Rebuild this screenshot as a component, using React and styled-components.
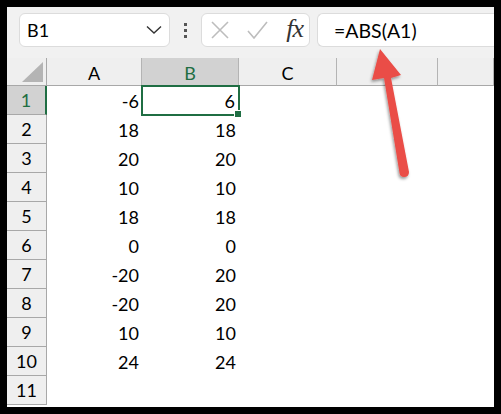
import React from "react";
import styled, { createGlobalStyle } from "styled-components";

const GlobalStyle = createGlobalStyle`
  html, body {
    margin: 0;
    padding: 0;
    background: #000;
  }
  body {
    font-family: Lato, "Liberation Sans", sans-serif;
    color: #000;
  }
`;

const rows = [
  ["-6", "6"],
  ["18", "18"],
  ["20", "20"],
  ["10", "10"],
  ["18", "18"],
  ["0", "0"],
  ["-20", "20"],
  ["-20", "20"],
  ["10", "10"],
  ["24", "24"],
  ["", ""],
];

const GREEN = "#1f6e43";

const Frame = styled.div`
  position: relative;
  box-sizing: border-box;
  width: 501px;
  height: 414px;
  border: 7px solid #000;
  background: #fff;
  overflow: hidden;
`;

const FormulaBar = styled.div`
  display: flex;
  align-items: center;
  height: 51px;
  box-sizing: border-box;
  padding: 6px 0 11px 12px;
  background: #f1f1f1;
`;

const Box = styled.div`
  display: flex;
  flex-shrink: 0;
  align-items: center;
  box-sizing: border-box;
  height: 34px;
  background: #fff;
  border: 1px solid #dcdcdc;
  border-radius: 6px;
`;

const NameBox = styled(Box)`
  width: 151px;
  justify-content: space-between;
  padding: 0 7px;
  font-size: 18px;
`;

const Dots = styled.div`
  display: flex;
  flex-shrink: 0;
  flex-direction: column;
  gap: 3px;
  width: 31px;
  align-items: center;
  i {
    width: 3px;
    height: 3px;
    background: #555;
  }
`;

const ButtonBox = styled(Box)`
  width: 109px;
  justify-content: space-between;
  padding: 0 6px 0 9px;
`;

const Fx = styled.span`
  font-family: "Liberation Serif", serif;
  font-style: italic;
  font-size: 26px;
  line-height: 30px;
  color: #333;
  margin-bottom: 2px;
  letter-spacing: -1px;
`;

const FormulaBox = styled(Box)`
  flex: 1;
  margin-left: 7px;
  padding-left: 16px;
  border-right: none;
  border-radius: 6px 0 0 6px;
  font-size: 19.5px;
`;

const Sheet = styled.div`
  display: grid;
  grid-template-columns: 40px 95px 97px 98px 101px 1fr;
  grid-template-rows: 28px repeat(11, 29px);
  background: #fff;
`;

const Corner = styled.div`
  position: relative;
  background: #efefef;
  border-right: 1px solid #a8a8a8;
  border-bottom: 1px solid #a8a8a8;
  &::after {
    content: "";
    position: absolute;
    right: 3px;
    bottom: 3px;
    border-style: solid;
    border-width: 0 0 20px 21px;
    border-color: transparent transparent #b4b4b4 transparent;
  }
`;

const ColHeader = styled.div`
  display: flex;
  align-items: center;
  justify-content: center;
  padding-top: 2px;
  font-size: 18px;
  background: ${(p) => (p.$active ? "#d2d2d2" : "#efefef")};
  color: ${(p) => (p.$active ? GREEN : "#000")};
  border-right: 1px solid #b4b4b4;
  border-bottom: 1px solid #a8a8a8;
`;

const RowHeader = styled.div`
  display: flex;
  align-items: center;
  justify-content: center;
  font-size: 18px;
  box-sizing: border-box;
  background: ${(p) => (p.$active ? "#d2d2d2" : "#efefef")};
  color: ${(p) => (p.$active ? GREEN : "#000")};
  border-right: ${(p) => (p.$active ? `2px solid ${GREEN}` : "1px solid #a8a8a8")};
  border-bottom: 1px solid #a8a8a8;
`;

const Cell = styled.div`
  display: flex;
  align-items: center;
  justify-content: flex-end;
  box-sizing: border-box;
  padding-right: 3px;
  font-size: 18px;
`;

const ActiveCell = styled(Cell)`
  position: relative;
  padding-right: 4px;
  outline: 2px solid ${GREEN};
  outline-offset: -1px;
  &::after {
    content: "";
    position: absolute;
    right: -3px;
    bottom: -3px;
    width: 6px;
    height: 6px;
    background: ${GREEN};
    border: 1px solid #fff;
  }
`;

const ArrowSvg = styled.svg`
  position: absolute;
  left: 336px;
  top: 35px;
  overflow: visible;
`;

function Arrow() {
  return (
    <ArrowSvg width="80" height="140" viewBox="343 42 80 140">
      <defs>
        <filter id="arrowShadow" x="-30%" y="-10%" width="160%" height="120%">
          <feDropShadow dx="-1" dy="2" stdDeviation="1.5" floodColor="#000" floodOpacity="0.4" />
        </filter>
      </defs>
      <path
        d="M380 49 L401 75 L391 78 L409 172 Q409 177 404 177 Q400 177 399.5 173 L384 78 L372 80 Z"
        fill="#ea4d47"
        filter="url(#arrowShadow)"
      />
    </ArrowSvg>
  );
}

export default function App() {
  return (
    <>
      <GlobalStyle />
      <Frame>
        <FormulaBar>
          <NameBox>
            B1
            <svg width="16" height="10" viewBox="0 0 16 10" fill="none" stroke="#333" strokeWidth="1.4">
              <path d="M1 1.5 L8 8 L15 1.5" />
            </svg>
          </NameBox>
          <Dots>
            <i />
            <i />
            <i />
          </Dots>
          <ButtonBox>
            <svg width="18" height="18" viewBox="0 0 18 18" fill="none" stroke="#bdbdbd" strokeWidth="1.6">
              <path d="M1 1 L17 17 M17 1 L1 17" />
            </svg>
            <svg width="21" height="18" viewBox="0 0 21 18" fill="none" stroke="#bdbdbd" strokeWidth="1.6">
              <path d="M1 10 L7 17 L20 1" />
            </svg>
            <Fx>fx</Fx>
          </ButtonBox>
          <FormulaBox>=ABS(A1)</FormulaBox>
        </FormulaBar>
        <Sheet>
          <Corner />
          {["A", "B", "C", "", ""].map((c, i) => (
            <ColHeader key={i} $active={c === "B"}>
              {c}
            </ColHeader>
          ))}
          {rows.map(([a, b], i) => (
            <React.Fragment key={i}>
              <RowHeader $active={i === 0}>{i + 1}</RowHeader>
              <Cell>{a}</Cell>
              {i === 0 ? <ActiveCell>{b}</ActiveCell> : <Cell>{b}</Cell>}
              <Cell />
              <Cell />
              <Cell />
            </React.Fragment>
          ))}
        </Sheet>
        <Arrow />
      </Frame>
    </>
  );
}
